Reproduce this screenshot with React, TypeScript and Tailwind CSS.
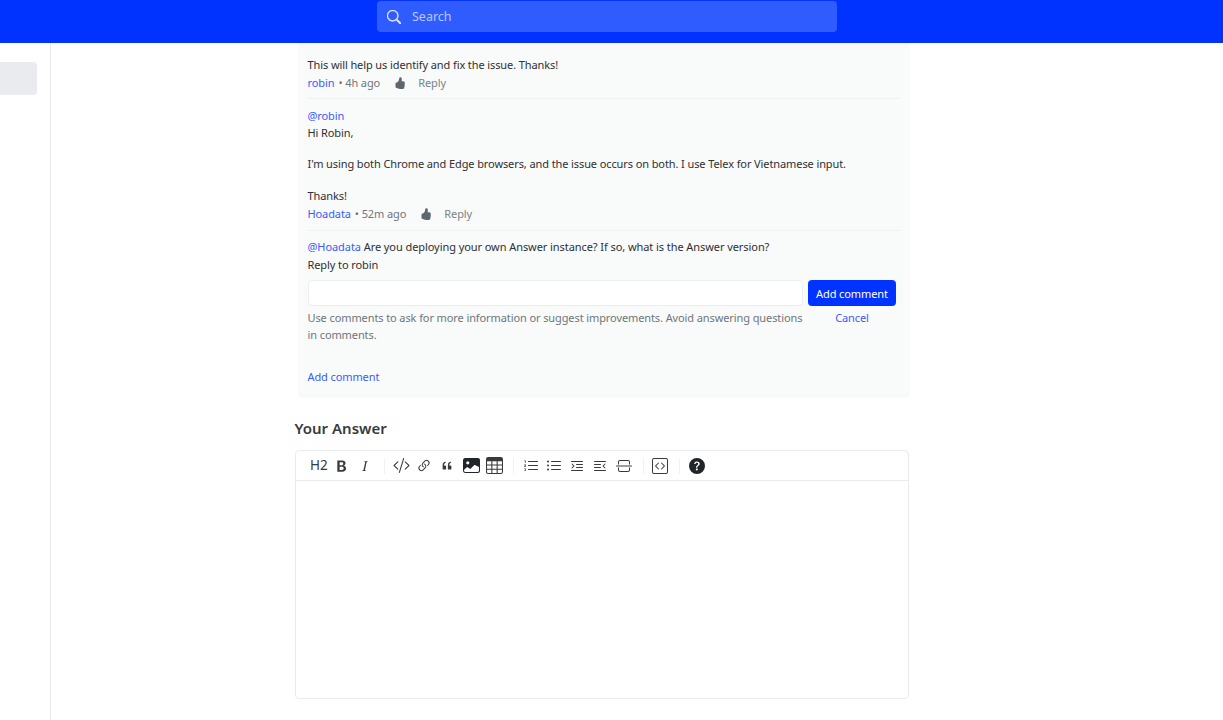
import React from "react";
import {
  BsSearch, BsHandThumbsUpFill, BsTypeBold, BsTypeItalic, BsCodeSlash, BsLink45Deg, BsQuote, BsImageFill,
  BsTable, BsListOl, BsListUl, BsTextIndentLeft, BsTextIndentRight, BsHr, BsCodeSquare, BsQuestionCircleFill,
} from "react-icons/bs";

function Meta({ name, time, mt = "" }: { name: string; time: string; mt?: string }) {
  return (
    <div className={`flex items-center h-[17px] ${mt}`}>
      <span className="text-[#3a5cff]">{name}</span>
      <span className="text-[#6f767c] ml-[4px]">• {time}</span>
      <BsHandThumbsUpFill className="text-[#5f676e] ml-[13.5px] w-[12px] h-[12px]" />
      <span className="text-[#7a8288] ml-[12.5px]">Reply</span>
    </div>
  );
}

function Tool({ children, cls = "" }: { children: React.ReactNode; cls?: string }) {
  return <span className={`flex items-center justify-center ${cls}`}>{children}</span>;
}

function Divider({ ml, mr }: { ml: string; mr: string }) {
  return <span className={`w-px h-[16px] bg-[#f1f2f4] ${ml} ${mr}`} />;
}

export default function App() {
  return (
    <div className="h-[720px] overflow-hidden bg-white text-[#2e3033] font-['Noto_Sans','Open_Sans',sans-serif] text-[11px] tracking-[-0.1px] leading-[17px]">
      <header className="h-[43px] bg-[#0033ff] pl-[377px] pt-px">
        <div className="w-[460px] h-[31px] rounded-[4px] bg-[#2f5cff] flex items-center pl-[10px] text-[#b9c8ff] text-[12.5px] tracking-normal">
          <BsSearch className="w-[14px] h-[14px] text-[#e6ebff]" stroke="currentColor" strokeWidth={0.5} />
          <span className="ml-[11px]">Search</span>
        </div>
      </header>
      <div className="flex h-[677px]">
        <aside className="w-[51px] border-r border-[#e8eaec] pt-[19px] shrink-0">
          <div className="w-[37px] h-[33px] rounded-r-[4px] bg-[#e9ebee]" />
        </aside>
        <main className="ml-[243.5px] w-[614.5px]">
          <section className="ml-[3.5px] w-[612px] h-[355px] bg-[#f9fafa] rounded-b-[4px] pl-[9.5px] pr-[10px] pt-[13px]">
            <div>This will help us identify and fix the issue. Thanks!</div>
            <Meta name="robin" time="4h ago" mt="mt-px" />
            <div className="mt-[7px] border-t border-[#f0f1f3] pt-[8px]">
              <div className="text-[#3a5cff]">@robin</div>
              <div>Hi Robin,</div>
              <div className="mt-[14px]">I'm using both Chrome and Edge browsers, and the issue occurs on both. I use Telex for Vietnamese input.</div>
              <div className="mt-[15px]">Thanks!</div>
              <Meta name="Hoadata" time="52m ago" mt="mt-px" />
            </div>
            <div className="mt-[8px] border-t border-[#f0f1f3] pt-[7px]">
              <div className="tracking-[-0.07px]"><span className="text-[#3a5cff]">@Hoadata</span> Are you deploying your own Answer instance? If so, what is the Answer version?</div>
              <div className="mt-px">Reply to robin</div>
              <div className="flex mt-[7px] h-[26px]">
                <div className="w-[495px] rounded-[4px] border border-[#eceef0] bg-white" />
                <button className="ml-[5.5px] w-[88px] rounded-[4px] bg-[#0033ff] text-white">Add comment</button>
              </div>
              <div className="flex mt-[3px]">
                <div className="w-[495px] text-[#6f767c]">Use comments to ask for more information or suggest improvements. Avoid answering questions in comments.</div>
                <div className="ml-[5.5px] w-[88px] text-center text-[#3a5cff]">Cancel</div>
              </div>
            </div>
            <div className="mt-[25px] text-[#3a5cff]">Add comment</div>
          </section>
          <h2 className="mt-[20px] text-[#3a3a3a] text-[15px] tracking-normal leading-[21px] font-semibold">Your Answer</h2>
          <div className="mt-[11px] h-[249px] rounded-[4px] border border-[#e8eaec] flex flex-col">
            <div className="h-[30px] border-b border-[#e8eaec] flex items-center pl-[14.5px] text-[#3a3a3a] shrink-0">
              <span className="text-[13.5px] tracking-normal w-[20px]">H2</span>
              <Tool cls="ml-[3px] w-[18px]"><BsTypeBold className="w-[18px] h-[18px]" /></Tool>
              <Tool cls="ml-[5px] w-[18px]"><BsTypeItalic className="w-[16px] h-[16px]" /></Tool>
              <Divider ml="ml-[10px]" mr="mr-[7px]" />
              <Tool cls="w-[18px]"><BsCodeSlash className="w-[17px] h-[17px]" /></Tool>
              <Tool cls="ml-[6px] w-[16px]"><BsLink45Deg className="w-[18px] h-[18px]" /></Tool>
              <Tool cls="ml-[8px] w-[14px]"><BsQuote className="w-[18px] h-[18px]" /></Tool>
              <Tool cls="ml-[8px] w-[18px]"><BsImageFill className="w-[17px] h-[17px] text-[#212529]" /></Tool>
              <Tool cls="ml-[5px] w-[18px]"><BsTable className="w-[17px] h-[17px]" /></Tool>
              <Divider ml="ml-[10px]" mr="mr-[9px]" />
              <Tool cls="w-[16px]"><BsListOl className="w-[16px] h-[16px]" /></Tool>
              <Tool cls="ml-[7px] w-[16px]"><BsListUl className="w-[16px] h-[16px]" /></Tool>
              <Tool cls="ml-[7px] w-[16px]"><BsTextIndentLeft className="w-[16px] h-[16px]" /></Tool>
              <Tool cls="ml-[7px] w-[16px]"><BsTextIndentRight className="w-[16px] h-[16px]" /></Tool>
              <Tool cls="ml-[7.5px] w-[16px]"><BsHr className="w-[16px] h-[16px]" /></Tool>
              <Divider ml="ml-[11px]" mr="mr-[8.5px]" />
              <Tool cls="w-[16px]"><BsCodeSquare className="w-[16px] h-[16px]" /></Tool>
              <Divider ml="ml-[11px]" mr="mr-[9px]" />
              <Tool cls="w-[16px]"><BsQuestionCircleFill className="w-[16px] h-[16px] text-[#212529]" /></Tool>
            </div>
            <div className="flex-1" />
          </div>
        </main>
      </div>
    </div>
  );
}
